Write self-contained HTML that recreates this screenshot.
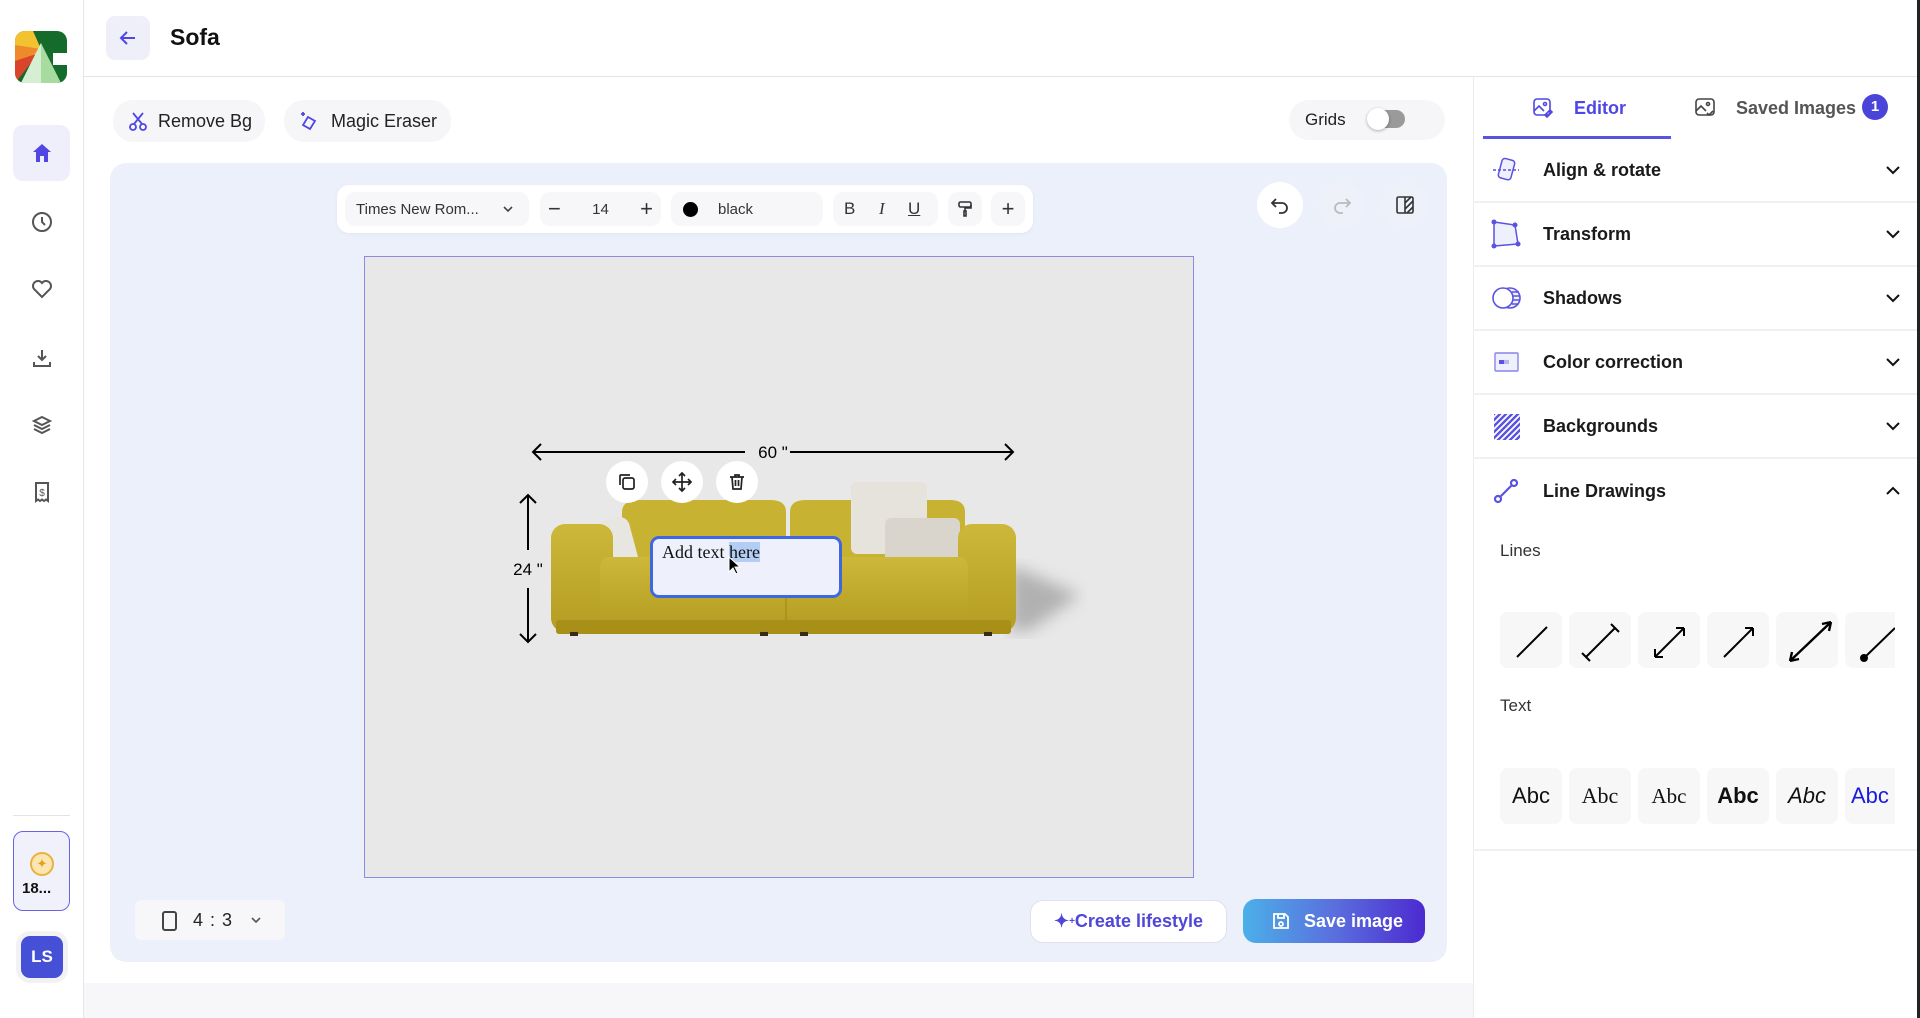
<!DOCTYPE html>
<html><head><meta charset="utf-8">
<style>
*{box-sizing:border-box;margin:0;padding:0}
body{width:1920px;height:1018px;position:relative;overflow:hidden;background:#fff;font-family:"Liberation Sans",sans-serif;color:#111}
.abs{position:absolute}
.side{left:0;top:0;width:84px;height:1018px;border-right:1px solid #e6e6ea;background:#fff}
.ic{position:absolute;left:30px;width:24px;height:24px}
.pill{position:absolute;background:#f6f6f8;border-radius:20px;display:flex;align-items:center;font-size:18px;color:#222}
.tb{background:#f7f7fa;border-radius:10px;position:absolute;top:7px;height:34px;display:flex;align-items:center;justify-content:center;font-size:15px;color:#333}
.row{position:absolute;left:1473px;width:444px;height:64px;border-bottom:2px solid #f0f0f2;display:flex;align-items:center}
.row span{position:absolute;left:70px;font-size:18px;font-weight:bold;color:#1a1a1a}
.row svg.i{position:absolute;left:18px}
.row .chev{position:absolute;left:412px}
.lb{position:absolute;width:62px;height:56px;background:#f7f7f7;border-radius:8px}
.circ{position:absolute;width:46px;height:46px;border-radius:50%;background:#fff;display:flex;align-items:center;justify-content:center}
</style></head><body>

<!-- sidebar -->
<div class="abs side"></div>
<svg class="abs" style="left:15px;top:31px" width="52" height="52" viewBox="0 0 52 52">
<defs><clipPath id="lc"><rect width="52" height="52" rx="10"/></clipPath></defs>
<g clip-path="url(#lc)">
<rect width="52" height="52" fill="#146b2a"/>
<polygon points="0,0 18,0 26,18 0,52" fill="#f2c230"/>
<polygon points="0,14 26,18 0,36" fill="#ee8a2a"/>
<polygon points="0,30 24,22 0,52" fill="#d8452a"/>
<rect x="38" y="22" width="14" height="12" fill="#fff"/>
<polygon points="26,12 6,52 46,52" fill="#a7dba0"/>
<polygon points="26,12 6,52 26,52" fill="#d6efd2"/>
</g></svg>
<div class="abs" style="left:13px;top:125px;width:57px;height:56px;background:#efeffc;border-radius:10px"></div>
<svg class="ic" style="top:141px" viewBox="0 0 24 24"><path d="M12 3 L3 11 H6 V21 H10 V15 H14 V21 H18 V11 H21 Z" fill="#5046e5"/></svg>
<svg class="ic" style="top:210px" viewBox="0 0 24 24" fill="none" stroke="#555" stroke-width="2"><circle cx="12" cy="12" r="9"/><path d="M12 7v5l3 3"/></svg>
<svg class="ic" style="top:277px" viewBox="0 0 24 24" fill="none" stroke="#555" stroke-width="2"><path d="M12 20 L4 12 A4.5 4.5 0 0 1 12 6 A4.5 4.5 0 0 1 20 12 Z"/></svg>
<svg class="ic" style="top:346px" viewBox="0 0 24 24" fill="none" stroke="#555" stroke-width="2"><path d="M12 4v10M8 10l4 4 4-4M4 16v4h16v-4"/></svg>
<svg class="ic" style="top:413px" viewBox="0 0 24 24" fill="none" stroke="#555" stroke-width="2"><path d="M12 4l8 4-8 4-8-4z M4 12l8 4 8-4 M4 16l8 4 8-4"/></svg>
<svg class="ic" style="top:480px" viewBox="0 0 24 24" fill="none" stroke="#555" stroke-width="2"><path d="M6 3h12v18l-2-1.5-2 1.5-2-1.5-2 1.5-2-1.5-2 1.5z"/><text x="12" y="16" font-size="10" text-anchor="middle" fill="#555" stroke="none" font-family="Liberation Sans">$</text></svg>
<div class="abs" style="left:13px;top:815px;width:57px;height:1px;background:#e3e3e6"></div>
<div class="abs" style="left:13px;top:831px;width:57px;height:80px;border:1.5px solid #6b63e6;border-radius:10px;background:#f1f1fc"></div>
<div class="abs" style="left:30px;top:852px;width:24px;height:24px;border-radius:50%;background:#fbe5b0;border:2px solid #eab23a;color:#e0a020;font-size:13px;text-align:center;line-height:20px">✦</div>
<div class="abs" style="left:22px;top:880px;font-size:15px;font-weight:bold">18...</div>
<div class="abs" style="left:21px;top:936px;width:42px;height:42px;background:#4650d6;border-radius:9px;color:#fff;font-size:17px;font-weight:bold;text-align:center;line-height:42px;box-shadow:0 0 0 5px #f2f2f4">LS</div>

<!-- header -->
<div class="abs" style="left:84px;top:76px;width:1836px;height:1px;background:#e4e4e8"></div>
<div class="abs" style="left:106px;top:16px;width:44px;height:44px;background:#efeffa;border-radius:9px"></div>
<svg class="abs" style="left:116px;top:26px" width="24" height="24" viewBox="0 0 24 24" fill="none" stroke="#5046e5" stroke-width="2"><path d="M19 12H5M11 6l-6 6 6 6"/></svg>
<div class="abs" style="left:170px;top:24px;font-size:23px;font-weight:bold">Sofa</div>

<div class="pill" style="left:113px;top:100px;width:152px;height:42px">
<svg style="margin-left:16px" width="18" height="20" viewBox="0 0 18 20" fill="none" stroke="#5046e5" stroke-width="1.8"><circle cx="4" cy="16" r="3"/><circle cx="14" cy="16" r="3"/><path d="M5 13L14 2M13 13L4 2"/></svg>
<span style="margin-left:11px">Remove Bg</span></div>
<div class="pill" style="left:284px;top:100px;width:167px;height:42px">
<svg style="margin-left:16px" width="20" height="20" viewBox="0 0 20 20" fill="none" stroke="#5046e5" stroke-width="1.8"><path d="M8 6l7 4-5 8-7-4z M3 1v4M1 3h4"/></svg>
<span style="margin-left:11px">Magic Eraser</span></div>

<div class="pill" style="left:1289px;top:100px;width:156px;height:40px">
<span style="margin-left:16px;font-size:17px">Grids</span>
<div style="position:absolute;left:80px;top:10px;width:36px;height:18px;border-radius:9px;background:#9a9a9a"></div>
<div style="position:absolute;left:78px;top:8px;width:22px;height:22px;border-radius:50%;background:#fff;box-shadow:0 1px 3px rgba(0,0,0,.3)"></div>
</div>

<!-- canvas panel -->
<div class="abs" style="left:110px;top:163px;width:1337px;height:799px;background:#ecf0fa;border-radius:16px"></div>
<div class="abs" style="left:84px;top:983px;width:1389px;height:35px;background:#f7f7f9"></div>

<div class="abs" style="left:337px;top:185px;width:696px;height:48px;background:#fff;border-radius:12px;box-shadow:0 1px 4px rgba(0,0,0,.05)">
<div class="tb" style="left:8px;width:184px;justify-content:flex-start;padding-left:11px">Times New Rom...<svg style="position:absolute;right:14px" width="14" height="14" viewBox="0 0 14 14" fill="none" stroke="#444" stroke-width="1.6"><path d="M3 5l4 4 4-4"/></svg></div>
<div class="tb" style="left:203px;width:121px;font-size:15px"><span style="position:absolute;left:8px;font-size:22px">−</span>14<span style="position:absolute;right:8px;font-size:22px">+</span></div>
<div class="tb" style="left:334px;width:152px;justify-content:flex-start"><span style="margin-left:12px;width:15px;height:15px;border-radius:50%;background:#000;display:inline-block"></span><span style="margin-left:20px">black</span></div>
<div class="tb" style="left:496px;width:105px;font-size:17px"><span style="position:absolute;left:11px">B</span><span style="position:absolute;left:46px;font-style:italic;font-family:'Liberation Serif'">I</span><span style="position:absolute;left:75px;text-decoration:underline">U</span></div>
<div class="tb" style="left:611px;width:34px"><svg width="18" height="18" viewBox="0 0 18 18" fill="none" stroke="#333" stroke-width="1.6"><rect x="3" y="2" width="12" height="5" rx="1.5"/><path d="M15 5v3H9v3M8 11h2v5H8z"/></svg></div>
<div class="tb" style="left:654px;width:34px;font-size:22px">+</div>
</div>

<div class="circ" style="left:1257px;top:182px"><svg width="22" height="22" viewBox="0 0 22 22" fill="none" stroke="#333" stroke-width="1.8"><path d="M7 5L3 9l4 4M3 9h10a5 5 0 0 1 0 10h-3"/></svg></div>
<div class="circ" style="left:1319px;top:182px;background:#eef1fa"><svg width="22" height="22" viewBox="0 0 22 22" fill="none" stroke="#bbb" stroke-width="1.8"><path d="M15 5l4 4-4 4M19 9H9a5 5 0 0 0 0 10h3"/></svg></div>
<div class="circ" style="left:1382px;top:182px;background:#eef1fa"><svg width="22" height="22" viewBox="0 0 22 22" fill="none" stroke="#333" stroke-width="1.6"><rect x="3" y="3" width="16" height="16" rx="1.5"/><path d="M11 3v16M11 9l6-6M11 15l8-8M13 19l6-6"/></svg></div>

<!-- canvas -->
<div class="abs" style="left:364px;top:256px;width:830px;height:622px;background:#e8e8e8;border:1px solid #8d8ae0"></div>
<svg class="abs" style="left:0;top:0" width="1920" height="1018" viewBox="0 0 1920 1018">
<defs><linearGradient id="sf" x1="0" y1="0" x2="0" y2="1"><stop offset="0" stop-color="#cdb83a"/><stop offset="1" stop-color="#b49d22"/></linearGradient>
<filter id="bl"><feGaussianBlur stdDeviation="8"/></filter></defs>
<polygon points="1010,565 1080,595 1030,630 1010,632" fill="#9a9a9a" filter="url(#bl)" opacity=".7"/>
<path d="M622 512 Q622 500 640 500 H770 Q786 500 786 512 V590 H622Z" fill="#c8b231"/>
<path d="M790 512 Q790 500 806 500 H950 Q965 500 965 512 V590 H790Z" fill="#c8b231"/>
<rect x="851" y="482" width="76" height="72" rx="6" fill="#e6e3dc"/>
<rect x="885" y="518" width="75" height="52" rx="6" fill="#d9d5cc"/>
<rect x="602" y="518" width="32" height="52" rx="10" fill="#e8e6e0" transform="rotate(-15 618 544)"/>
<rect x="551" y="524" width="62" height="108" rx="14" fill="url(#sf)"/>
<rect x="958" y="524" width="58" height="108" rx="14" fill="url(#sf)"/>
<rect x="600" y="557" width="187" height="70" rx="10" fill="url(#sf)"/>
<rect x="786" y="557" width="182" height="70" rx="10" fill="url(#sf)"/>
<path d="M786 560V630" stroke="#9a8415" stroke-width="1"/>
<rect x="556" y="620" width="455" height="14" rx="3" fill="#a88f18"/>
<rect x="570" y="632" width="8" height="4" fill="#3a2a1a"/><rect x="760" y="632" width="8" height="4" fill="#3a2a1a"/><rect x="800" y="632" width="8" height="4" fill="#3a2a1a"/><rect x="984" y="632" width="8" height="4" fill="#3a2a1a"/>
<g stroke="#000" stroke-width="2" fill="none">
<path d="M533 452H745M790 452H1013M541 444l-8 8 8 8M1005 444l8 8-8 8"/>
<path d="M528 495V550M528 588V642M520 503l8-8 8 8M520 634l8 8 8-8"/>
</g>
<text x="773" y="458" font-size="17" text-anchor="middle" font-family="Liberation Sans">60 "</text>
<text x="528" y="575" font-size="17" text-anchor="middle" font-family="Liberation Sans">24 "</text>
</svg>

<div class="circ" style="left:606px;top:461px;width:42px;height:42px"><svg width="20" height="20" viewBox="0 0 20 20" fill="none" stroke="#222" stroke-width="1.7"><rect x="6" y="6" width="11" height="11" rx="2"/><path d="M3 13V4a1 1 0 0 1 1-1h9"/></svg></div>
<div class="circ" style="left:661px;top:461px;width:42px;height:42px"><svg width="22" height="22" viewBox="0 0 22 22" fill="none" stroke="#222" stroke-width="1.7"><path d="M11 2v18M2 11h18M8 5l3-3 3 3M8 17l3 3 3-3M5 8l-3 3 3 3M17 8l3 3-3 3"/></svg></div>
<div class="circ" style="left:716px;top:461px;width:42px;height:42px"><svg width="20" height="20" viewBox="0 0 20 20" fill="none" stroke="#222" stroke-width="1.7"><path d="M3 5h14M8 5V3h4v2M5 5l1 12h8l1-12M8.5 8v6M11.5 8v6"/></svg></div>

<div class="abs" style="left:650px;top:536px;width:192px;height:62px;background:#eef1fb;border:3px solid #3f67e0;border-radius:9px"></div>
<div class="abs" style="left:662px;top:542px;font-family:'Liberation Serif',serif;font-size:18px">Add text <span style="background:#b3cdf5">here</span></div>
<svg class="abs" style="left:728px;top:556px" width="14" height="20" viewBox="0 0 14 20"><path d="M1 1v15l4-4 3 6 2-1-3-6h5z" fill="#000" stroke="#fff" stroke-width="1"/></svg>

<!-- bottom controls -->
<div class="abs" style="left:135px;top:900px;width:150px;height:40px;background:#f7f7f9;border-radius:6px;font-size:18px;color:#222">
<div style="position:absolute;left:27px;top:11px;width:15px;height:20px;border:2px solid #444;border-radius:3px"></div>
<span style="position:absolute;left:58px;top:10px;letter-spacing:1px">4 : 3</span>
<svg style="position:absolute;left:114px;top:14px" width="14" height="12" viewBox="0 0 14 12" fill="none" stroke="#555" stroke-width="1.6"><path d="M3 4l4 4 4-4"/></svg></div>
<div class="abs" style="left:1030px;top:900px;width:197px;height:43px;background:#fff;border:1px solid #e0e0ee;border-radius:13px;color:#5046d8;font-size:18px;font-weight:bold;display:flex;align-items:center;justify-content:center">✦<sup style="font-size:10px">+</sup>Create lifestyle</div>
<div class="abs" style="left:1243px;top:899px;width:182px;height:44px;border-radius:13px;background:linear-gradient(90deg,#4bb0e8,#5a6fde 50%,#4c2ad0);color:#fff;font-size:18px;font-weight:bold;display:flex;align-items:center">
<svg style="margin-left:28px" width="20" height="20" viewBox="0 0 20 20" fill="none" stroke="#fff" stroke-width="1.8"><path d="M3 3h11l3 3v11H3z"/><path d="M7 3v4h6V3"/><circle cx="10" cy="13" r="2"/></svg>
<span style="margin-left:13px">Save image</span></div>

<!-- right panel -->
<div class="abs" style="left:1473px;top:76px;width:1px;height:942px;background:#ebebee"></div>
<div class="abs" style="left:1917px;top:0;width:3px;height:1018px;background:#222"></div>
<svg class="abs" style="left:1532px;top:97px" width="22" height="22" viewBox="0 0 22 22" fill="none" stroke="#5046e5" stroke-width="1.6"><rect x="2" y="2" width="16" height="16" rx="3"/><path d="M2 14l5-5 5 5"/><circle cx="13" cy="7" r="1.5"/><path d="M15 20l5-5-2-2-5 5z"/></svg>
<div class="abs" style="left:1574px;top:98px;font-size:18px;font-weight:bold;color:#5046e5">Editor</div>
<div class="abs" style="left:1483px;top:136px;width:188px;height:3px;background:#5a52e0"></div>
<svg class="abs" style="left:1694px;top:97px" width="22" height="22" viewBox="0 0 22 22" fill="none" stroke="#444" stroke-width="1.6"><rect x="2" y="2" width="18" height="16" rx="3"/><path d="M2 14l5-5 5 5"/><circle cx="14" cy="7" r="1.5"/><path d="M13 16l2 2 4-4"/></svg>
<div class="abs" style="left:1736px;top:98px;font-size:18px;font-weight:bold;color:#555">Saved Images</div>
<div class="abs" style="left:1862px;top:94px;width:26px;height:26px;border-radius:50%;background:#4a44d8;color:#fff;font-size:15px;font-weight:bold;text-align:center;line-height:26px">1</div>

<div class="row" style="top:139px"><svg class="i" width="30" height="30" viewBox="0 0 30 30" fill="#eef0fb" stroke="#5a52e0" stroke-width="1.5"><rect x="9" y="4" width="13" height="20" rx="3" transform="rotate(15 15 14)"/><path d="M2 15h26" stroke-dasharray="3 2"/></svg><span>Align &amp; rotate</span><svg class="chev" width="16" height="16" viewBox="0 0 16 16" fill="none" stroke="#111" stroke-width="2"><path d="M2 5l6 6 6-6"/></svg></div>
<div class="row" style="top:203px"><svg class="i" width="30" height="30" viewBox="0 0 30 30" fill="#eef0fb" stroke="#5a52e0" stroke-width="1.5"><path d="M3 3L24 6 27 25 3 27Z"/><g fill="#5a52e0"><circle cx="3" cy="3" r="1.8"/><circle cx="24" cy="6" r="1.8"/><circle cx="27" cy="25" r="1.8"/><circle cx="3" cy="27" r="1.8"/></g></svg><span>Transform</span><svg class="chev" width="16" height="16" viewBox="0 0 16 16" fill="none" stroke="#111" stroke-width="2"><path d="M2 5l6 6 6-6"/></svg></div>
<div class="row" style="top:267px"><svg class="i" width="32" height="30" viewBox="0 0 32 30" fill="none" stroke="#5a52e0" stroke-width="1.6"><circle cx="19" cy="15" r="10" fill="#eef0fb"/><path d="M21 9h7M22 13h7M22 17h7M21 21h6"/><circle cx="12" cy="15" r="10" fill="#fff"/></svg><span>Shadows</span><svg class="chev" width="16" height="16" viewBox="0 0 16 16" fill="none" stroke="#111" stroke-width="2"><path d="M2 5l6 6 6-6"/></svg></div>
<div class="row" style="top:331px"><svg class="i" width="30" height="30" viewBox="0 0 30 30"><rect x="4" y="6" width="23" height="18" rx="1" fill="#eef0fb" stroke="#8a84ea" stroke-width="1.4"/><rect x="8" y="13" width="5" height="4" fill="#5a52e0"/><rect x="13" y="13" width="5" height="4" fill="#b8b4f0"/></svg><span>Color correction</span><svg class="chev" width="16" height="16" viewBox="0 0 16 16" fill="none" stroke="#111" stroke-width="2"><path d="M2 5l6 6 6-6"/></svg></div>
<div class="row" style="top:395px"><svg class="i" width="30" height="30" viewBox="0 0 30 30"><defs><clipPath id="bg"><rect x="3" y="3" width="26" height="26"/></clipPath></defs><g clip-path="url(#bg)" stroke="#5a52e0" stroke-width="2.4"><path d="M-5 11L11-5M-5 17L17-5M-5 23L23-5M-5 29L29-5M-5 35L35-5M1 35L35 1M7 35L35 7M13 35L35 13M19 35L35 19M25 35L35 25"/></g></svg><span>Backgrounds</span><svg class="chev" width="16" height="16" viewBox="0 0 16 16" fill="none" stroke="#111" stroke-width="2"><path d="M2 5l6 6 6-6"/></svg></div>
<div class="row" style="top:459px;border-bottom:none"><svg class="i" width="30" height="30" viewBox="0 0 30 30" fill="none" stroke="#5a52e0" stroke-width="2.2"><circle cx="7" cy="23" r="3"/><circle cx="23" cy="7" r="3"/><path d="M9 21L21 9"/></svg><span>Line Drawings</span><svg class="chev" width="16" height="16" viewBox="0 0 16 16" fill="none" stroke="#111" stroke-width="2"><path d="M2 11l6-6 6 6"/></svg></div>

<div class="abs" style="left:1500px;top:541px;font-size:17px;color:#333">Lines</div>
<div class="abs" style="left:1500px;top:696px;font-size:17px;color:#333">Text</div>
<div class="abs" style="left:1473px;top:849px;width:444px;height:2px;background:#f0f0f2"></div>
<div class="abs" style="left:1500px;top:600px;width:395px;height:240px;overflow:hidden">
<div class="lb" style="left:0;top:12px"></div><div class="lb" style="left:69px;top:12px"></div><div class="lb" style="left:138px;top:12px"></div><div class="lb" style="left:207px;top:12px"></div><div class="lb" style="left:276px;top:12px"></div><div class="lb" style="left:345px;top:12px"></div>
<svg class="abs" style="left:0;top:12px" width="420" height="56" viewBox="0 0 420 56" fill="none" stroke="#000" stroke-width="2">
<path d="M17 45L47 15"/>
<path d="M86 45L115 16M82 41l8 8M111 12l8 8"/>
<path d="M155 45L184 16M155 45v-8M155 45h8M184 16v8M184 16h-8"/>
<path d="M224 45L253 16M253 16v8M253 16h-8"/>
<path d="M290 49L331 10M290 49l2-9M290 49l9-2M331 10l-2 9M331 10l-9 2" stroke-width="2.4"/>
<path d="M364 46L395 16"/><circle cx="364" cy="46" r="3" fill="#000"/>
</svg>
<div class="lb" style="left:0;top:168px"></div><div class="lb" style="left:69px;top:168px"></div><div class="lb" style="left:138px;top:168px"></div><div class="lb" style="left:207px;top:168px"></div><div class="lb" style="left:276px;top:168px"></div><div class="lb" style="left:345px;top:168px"></div>
<div class="abs" style="left:0;top:183px;width:62px;text-align:center;font-size:22px">Abc</div>
<div class="abs" style="left:69px;top:183px;width:62px;text-align:center;font-size:22px;font-family:'Liberation Serif',serif">Abc</div>
<div class="abs" style="left:138px;top:184px;width:62px;text-align:center;font-size:21px;font-family:'Liberation Serif',serif">Abc</div>
<div class="abs" style="left:207px;top:183px;width:62px;text-align:center;font-size:22px;font-weight:bold">Abc</div>
<div class="abs" style="left:276px;top:183px;width:62px;text-align:center;font-size:22px;font-style:italic">Abc</div>
<div class="abs" style="left:351px;top:183px;font-size:22px;color:#1a1ae0">Abc</div>
</div>
</body></html>
